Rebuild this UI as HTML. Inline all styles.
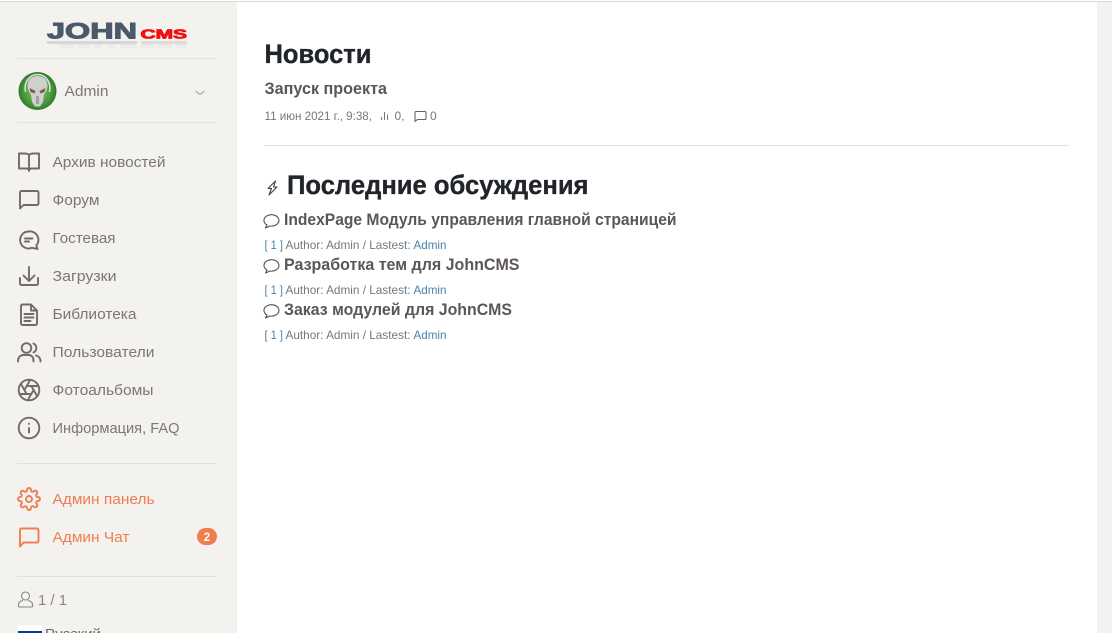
<!DOCTYPE html>
<html lang="ru">
<head>
<meta charset="utf-8">
<title>Новости</title>
<style>
html,body{margin:0;padding:0;width:1112px;height:633px;overflow:hidden;background:#fff}
svg{display:block;position:absolute;left:0;top:0}
text{font-family:"Liberation Sans",Arial,sans-serif}
.n{font-size:15px;fill:#7b7773}
.o{font-size:15px;fill:#f07d50}
.h{font-weight:bold;fill:#212529;stroke:#212529;stroke-width:.35}
.t{font-size:16.5px;font-weight:bold;fill:#5c5754}
.m{font-size:12px;fill:#6f7a82}
.b{font-size:12px;fill:#4a83ad}
.i{fill:none;stroke:#6f6b67;stroke-width:1.9;stroke-linecap:round;stroke-linejoin:round}
.io{fill:none;stroke:#f07d50;stroke-width:1.9;stroke-linecap:round;stroke-linejoin:round}
.l{fill:none;stroke:#55524f;stroke-width:1.1;stroke-linejoin:round;stroke-linecap:round}
</style>
</head>
<body>
<svg width="1112" height="633" viewBox="0 0 1112 633" xmlns="http://www.w3.org/2000/svg">
<defs>
<radialGradient id="av" cx=".5" cy=".5" r=".55"><stop offset="0" stop-color="#8cc66a"/><stop offset=".7" stop-color="#45963a"/><stop offset="1" stop-color="#2a6a25"/></radialGradient>
</defs>
<rect width="1112" height="633" fill="#fff"/>
<rect y="2" width="237" height="631" fill="#f3f2ef"/>
<rect x="1097" y="2" width="15" height="631" fill="#f3f2ef"/>
<rect y="1" width="1112" height="1" fill="#d8d8d8"/>

<!-- logo -->
<text x="47" y="38.500" font-size="22" font-weight="bold" fill="#4a5a6a" textLength="90" lengthAdjust="spacingAndGlyphs" stroke="#4a5a6a" stroke-width="1">JOHN</text>
<text x="140.500" y="38.500" font-size="12.500" font-weight="bold" fill="#f01010" textLength="46.500" lengthAdjust="spacingAndGlyphs" stroke="#f01010" stroke-width=".8">CMS</text>
<rect x="47" y="41" width="90" height="3" fill="#d6d6d6"/>
<rect x="141" y="41" width="46" height="3" fill="#dcdcdc"/>
<path d="M60 45h14M78 45h13M94 45h8M108 45h7M120 45h17M141 45h14M158 45h14M175 45h12" stroke="#e4e4e4" stroke-width="1.500"/>
<path d="M60 47.500h14M78 47.500h13M94 47.500h8M108 47.500h7M120 47.500h17M141 47.500h14M158 47.500h14M175 47.500h12" stroke="#ecebe9" stroke-width="1.500"/>
<rect x="17" y="58" width="200" height="1" fill="#e2e0e6"/>

<!-- user -->
<circle cx="37.500" cy="91" r="19" fill="url(#av)"/>
<path d="M37.500 76c-6 0-10 3.500-10 9.500 0 4 2 7 3.500 9l1 7.500 3 4.500h5l3-4.500 1-7.500c1.500-2 3.500-5 3.500-9 0-6-4-9.500-10-9.500z" fill="#cfcfcb"/>
<path d="M29.500 88l6 3-1 2.500-4-1.500zM45.500 88l-6 3 1 2.500 4-1.500z" fill="#7a5a5a"/>
<path d="M36 96h3v8h-3z" fill="#a0a0a0"/>
<path d="M25.500 92c-2-10 4-17.500 12-17.500S51.500 82 49.500 92" fill="none" stroke="#e0e0dc" stroke-width="1.500"/>
<text x="64.500" y="96" font-size="15" fill="#7b7773" textLength="44" lengthAdjust="spacingAndGlyphs">Admin</text>
<path d="M195.500 91l4.500 3.500 4.500-3.500" fill="none" stroke="#999" stroke-width="1"/>
<rect x="17" y="122" width="200" height="1" fill="#e2e0e6"/>

<!-- nav -->
<path class="i" d="M29 155c-1-1-2-1.500-4-1.500h-6v15h7c2 0 3 .5 3 2 0-1.500 1-2 3-2h7v-15h-6c-2 0-3 .5-4 1.500zM29 155v16"/>
<text class="n" x="52.500" y="167" textLength="113" lengthAdjust="spacingAndGlyphs">Архив новостей</text>

<path class="i" d="M20 208.500v-16a1.500 1.500 0 0 1 1.500-1.500h15.500a1.500 1.500 0 0 1 1.500 1.500v11a1.500 1.500 0 0 1-1.500 1.500h-13.500z"/>
<text class="n" x="52.500" y="205" textLength="47" lengthAdjust="spacingAndGlyphs">Форум</text>

<path class="i" d="M28.500 231.500a8.500 8.500 0 1 0 3.500 16.300l5.500 1.200-1.200-3.500a8.500 8.500 0 0 0-7.800-14z"/>
<path class="i" d="M25 238.500h7.500M25 241.500h4"/>
<text class="n" x="52.500" y="243" textLength="63" lengthAdjust="spacingAndGlyphs">Гостевая</text>

<path class="i" d="M29 267v13.500M23.500 275.500l5.500 5.500 5.500-5.500M20 278v5.500a1.500 1.500 0 0 0 1.500 1.500h15a1.500 1.500 0 0 0 1.500-1.500v-5.500"/>
<text class="n" x="52.500" y="281" textLength="64" lengthAdjust="spacingAndGlyphs">Загрузки</text>

<path class="i" d="M31 304.500h-8.500a1.500 1.500 0 0 0-1.500 1.500v17.500a1.500 1.500 0 0 0 1.500 1.500h13a1.500 1.500 0 0 0 1.500-1.500V310.500zM31 304.500v6h6M24.500 314h9M24.500 317.500h9M24.500 321h6"/>
<text class="n" x="52.500" y="319" textLength="84" lengthAdjust="spacingAndGlyphs">Библиотека</text>

<circle class="i" cx="26.500" cy="348" r="4.800"/>
<path class="i" d="M18 361.500v-1a5.500 5.500 0 0 1 5.500-5.500h5a5 5 0 0 1 5 5.500v1M33.500 343.500a5 5 0 0 1 0 9M36 355.500a5.500 5.500 0 0 1 4.500 5v1"/>
<text class="n" x="52.500" y="357" textLength="102" lengthAdjust="spacingAndGlyphs">Пользователи</text>

<g class="i" transform="translate(17 378)">
<circle cx="12" cy="12" r="10.300"/>
<path d="M14.310 8l5.740 9.940M9.690 8h11.480M7.380 12l5.740-9.940M9.690 16L3.950 6.060M14.310 16H2.830M16.620 12l-5.740 9.940"/>
</g>
<text class="n" x="52.500" y="395" textLength="101" lengthAdjust="spacingAndGlyphs">Фотоальбомы</text>

<circle class="i" cx="29" cy="428" r="10.300"/>
<path class="i" d="M29 428v4.500M29 423.700v.2"/>
<text class="n" x="52.500" y="433" textLength="127" lengthAdjust="spacingAndGlyphs">Информация, FAQ</text>

<rect x="17" y="463" width="200" height="1" fill="#dfdfe4"/>

<g class="io" transform="translate(17 487)">
<circle cx="12" cy="12" r="3"/>
<path d="M19.400 15a1.650 1.650 0 0 0 .33 1.820l.06.06a2 2 0 0 1 0 2.830 2 2 0 0 1-2.830 0l-.06-.06a1.650 1.650 0 0 0-1.820-.33 1.650 1.650 0 0 0-1 1.510V21a2 2 0 0 1-2 2 2 2 0 0 1-2-2v-.09A1.650 1.650 0 0 0 9 19.400a1.650 1.650 0 0 0-1.820.33l-.06.06a2 2 0 0 1-2.830 0 2 2 0 0 1 0-2.830l.06-.06a1.650 1.650 0 0 0 .33-1.820 1.650 1.650 0 0 0-1.510-1H3a2 2 0 0 1-2-2 2 2 0 0 1 2-2h.09A1.650 1.650 0 0 0 4.600 9a1.650 1.650 0 0 0-.33-1.820l-.06-.06a2 2 0 0 1 0-2.830 2 2 0 0 1 2.830 0l.06.06a1.650 1.650 0 0 0 1.820.33H9a1.650 1.650 0 0 0 1-1.510V3a2 2 0 0 1 2-2 2 2 0 0 1 2 2v.09a1.650 1.650 0 0 0 1 1.510 1.650 1.650 0 0 0 1.820-.33l.06-.06a2 2 0 0 1 2.830 0 2 2 0 0 1 0 2.830l-.06.06a1.650 1.650 0 0 0-.33 1.820V9a1.650 1.650 0 0 0 1.510 1H21a2 2 0 0 1 2 2 2 2 0 0 1-2 2h-.09a1.650 1.650 0 0 0-1.510 1z"/>
</g>
<text class="o" x="52.500" y="504" textLength="102" lengthAdjust="spacingAndGlyphs">Админ панель</text>

<path class="io" d="M20 546.500v-16.500a1.500 1.500 0 0 1 1.500-1.500h15.500a1.500 1.500 0 0 1 1.500 1.500v11a1.500 1.500 0 0 1-1.500 1.500h-13.500z"/>
<text class="o" x="52.500" y="542" textLength="77" lengthAdjust="spacingAndGlyphs">Админ Чат</text>
<rect x="197" y="528" width="20" height="17" rx="8.500" fill="#f07d50"/>
<text x="207" y="541" font-size="11.500" font-weight="bold" fill="#fff" text-anchor="middle">2</text>

<rect x="17" y="576" width="200" height="1" fill="#dfdfe4"/>

<circle cx="25.500" cy="596" r="4" fill="none" stroke="#8a8783" stroke-width="1.100"/>
<path d="M18.500 607v-2.500c0-2.500 2-3.500 4.500-4M32.500 607v-2.500c0-2.500-2-3.500-4.500-4M18.500 607h14" fill="none" stroke="#8a8783" stroke-width="1.100"/>
<text x="38" y="605" font-size="15" fill="#8a8783" textLength="29" lengthAdjust="spacingAndGlyphs">1 / 1</text>

<rect x="18" y="625" width="24" height="8" fill="#fff"/>
<rect x="18" y="631" width="24" height="2" fill="#0b3c9c"/>
<text x="45" y="638" font-size="13" fill="#6a6663" textLength="56" lengthAdjust="spacingAndGlyphs">Русский</text>

<!-- main -->
<text class="h" x="264.500" y="63" font-size="26.500" textLength="107" lengthAdjust="spacingAndGlyphs">Новости</text>
<text class="t" x="264.500" y="94" textLength="122.500" lengthAdjust="spacingAndGlyphs">Запуск проекта</text>

<text class="m" x="264.500" y="120" textLength="107.500" lengthAdjust="spacingAndGlyphs">11 июн 2021 г., 9:38,</text>
<path d="M381.500 120v-3M384.500 120v-8M387.500 120v-5.500" fill="none" stroke="#6f7a82" stroke-width="1"/>
<text class="m" x="394.500" y="120" textLength="10" lengthAdjust="spacingAndGlyphs">0,</text>
<path d="M415 121.500v-9a1 1 0 0 1 1-1h9a1 1 0 0 1 1 1v6a1 1 0 0 1-1 1h-7.500z" fill="none" stroke="#5f6468" stroke-width="1.100" stroke-linejoin="round"/>
<text class="m" x="430" y="120">0</text>

<rect x="264" y="145" width="805" height="1" fill="#e2e2e2"/>

<path class="l" d="M275.500 181L268 188.500h3.500L269 195l8-8h-3.500z" style="stroke:#3f3f3f"/>
<text class="h" x="287" y="194" font-size="26.500" textLength="301.500" lengthAdjust="spacingAndGlyphs">Последние обсуждения</text>

<path class="l" d="M265.500 228l1.500-3A7.500 5.700 0 1 1 270 226z"/>
<text class="t" x="284" y="225" textLength="392.500" lengthAdjust="spacingAndGlyphs">IndexPage Модуль управления главной страницей</text>
<text class="b" x="264.500" y="249" textLength="18.500" lengthAdjust="spacingAndGlyphs">[ 1 ]</text>
<text class="m" x="285.500" y="249" textLength="125" lengthAdjust="spacingAndGlyphs">Author: Admin / Lastest:</text>
<text class="b" x="413.500" y="249" textLength="33" lengthAdjust="spacingAndGlyphs">Admin</text>

<path class="l" d="M265.500 273l1.500-3A7.500 5.700 0 1 1 270 271z"/>
<text class="t" x="284" y="270" textLength="235.500" lengthAdjust="spacingAndGlyphs">Разработка тем для JohnCMS</text>
<text class="b" x="264.500" y="294" textLength="18.500" lengthAdjust="spacingAndGlyphs">[ 1 ]</text>
<text class="m" x="285.500" y="294" textLength="125" lengthAdjust="spacingAndGlyphs">Author: Admin / Lastest:</text>
<text class="b" x="413.500" y="294" textLength="33" lengthAdjust="spacingAndGlyphs">Admin</text>

<path class="l" d="M265.500 318l1.500-3A7.500 5.700 0 1 1 270 316z"/>
<text class="t" x="284" y="315" textLength="228" lengthAdjust="spacingAndGlyphs">Заказ модулей для JohnCMS</text>
<text class="b" x="264.500" y="339" textLength="18.500" lengthAdjust="spacingAndGlyphs">[ 1 ]</text>
<text class="m" x="285.500" y="339" textLength="125" lengthAdjust="spacingAndGlyphs">Author: Admin / Lastest:</text>
<text class="b" x="413.500" y="339" textLength="33" lengthAdjust="spacingAndGlyphs">Admin</text>
</svg>
</body>
</html>
